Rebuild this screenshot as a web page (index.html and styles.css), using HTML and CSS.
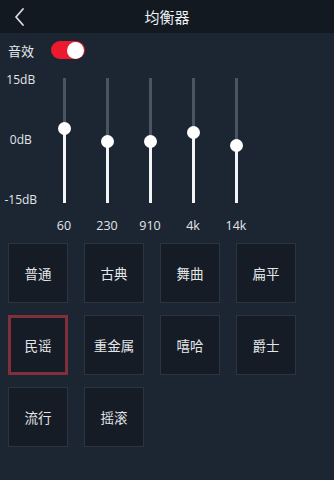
FILE: index.html
```html
<!DOCTYPE html>
<html lang="zh-CN">
<head>
<meta charset="utf-8">
<link rel="stylesheet" href="styles.css">
</head>
<body>
<div class="app">
  <header class="topbar">
    <svg class="back" width="12" height="20" viewBox="0 0 12 20"><polyline points="9,2 2,10 9,18" fill="none" stroke="#d8dde3" stroke-width="1.8" stroke-linecap="round" stroke-linejoin="round"/></svg>
    <div class="title">均衡器</div>
  </header>
  <div class="setting">
    <span class="setting-label">音效</span>
    <span class="toggle"><span class="knob"></span></span>
  </div>
  <div class="eq">
    <div class="scale">
      <span>15dB</span>
      <span>0dB</span>
      <span>-15dB</span>
    </div>
    <div class="band"><div class="track"><div class="rest" style="height:40%"></div><div class="fill"></div><span class="thumb" style="top:40%"></span></div><span class="freq">60</span></div>
    <div class="band"><div class="track"><div class="rest" style="height:50.4%"></div><div class="fill"></div><span class="thumb" style="top:50.4%"></span></div><span class="freq">230</span></div>
    <div class="band"><div class="track"><div class="rest" style="height:50.4%"></div><div class="fill"></div><span class="thumb" style="top:50.4%"></span></div><span class="freq">910</span></div>
    <div class="band"><div class="track"><div class="rest" style="height:43.2%"></div><div class="fill"></div><span class="thumb" style="top:43.2%"></span></div><span class="freq">4k</span></div>
    <div class="band"><div class="track"><div class="rest" style="height:53.6%"></div><div class="fill"></div><span class="thumb" style="top:53.6%"></span></div><span class="freq">14k</span></div>
  </div>
  <div class="presets">
    <div class="preset">普通</div>
    <div class="preset">古典</div>
    <div class="preset">舞曲</div>
    <div class="preset">扁平</div>
    <div class="preset active">民谣</div>
    <div class="preset">重金属</div>
    <div class="preset">嘻哈</div>
    <div class="preset">爵士</div>
    <div class="preset">流行</div>
    <div class="preset">摇滚</div>
  </div>
</div>
</body>
</html>
```
FILE: styles.css
```css
html, body {
  margin: 0;
  padding: 0;
  background: #1c2632;
}
body {
  width: 334px;
  height: 480px;
  overflow: hidden;
  font-family: "Open Sans", "Noto Sans CJK SC", sans-serif;
  color: #e6e9ed;
}
.app {
  display: flex;
  flex-direction: column;
}
.topbar {
  height: 33px;
  background: #131920;
  display: flex;
  align-items: center;
  position: relative;
}
.back {
  margin-left: 14px;
}
.title {
  position: absolute;
  left: 0;
  right: 0;
  text-align: center;
  font-family: "Noto Sans CJK SC", sans-serif;
  font-size: 15px;
  color: #eef0f3;
  line-height: 33px;
  pointer-events: none;
}
.setting {
  height: 34px;
  display: flex;
  align-items: center;
  padding-left: 8px;
  gap: 17px;
}
.setting-label {
  font-family: "Noto Sans CJK SC", sans-serif;
  font-size: 13px;
  color: #e6e9ed;
}
.toggle {
  width: 34px;
  height: 18px;
  border-radius: 9px;
  background: #ec1a2e;
  display: flex;
  justify-content: flex-end;
  align-items: center;
  padding: 0 1px;
  box-sizing: border-box;
}
.toggle .knob {
  width: 17px;
  height: 17px;
  border-radius: 50%;
  background: #ffffff;
}
.eq {
  display: grid;
  grid-template-columns: 34.5px repeat(5, 43px);
  padding-left: 8px;
  margin-top: 11px;
}
.scale {
  height: 134px;
  display: flex;
  flex-direction: column;
  justify-content: space-between;
  align-items: center;
  font-size: 12px;
  color: #e1e5e9;
  margin: -5px 7px 0 -2px;
}
.scale span {
  line-height: 14px;
  white-space: nowrap;
}
.band {
  display: flex;
  flex-direction: column;
  align-items: center;
}
.track {
  position: relative;
  width: 3px;
  height: 125px;
  display: flex;
  flex-direction: column;
}
.rest {
  background: #4a5561;
}
.fill {
  flex: 1;
  background: #f2f4f6;
}
.thumb {
  position: absolute;
  left: 50%;
  width: 13px;
  height: 13px;
  margin-left: -6.5px;
  margin-top: -6.5px;
  border-radius: 50%;
  background: #ffffff;
}
.freq {
  margin-top: 15px;
  font-size: 12.5px;
  line-height: 16px;
  color: #e1e5e9;
}
.presets {
  display: grid;
  grid-template-columns: repeat(4, 60px);
  grid-auto-rows: 60px;
  column-gap: 16px;
  row-gap: 12px;
  padding-left: 8px;
  margin-top: 9px;
}
.preset {
  box-sizing: border-box;
  border: 1px solid #2b3540;
  background: #151c25;
  display: flex;
  align-items: center;
  justify-content: center;
  font-family: "Noto Sans CJK SC", sans-serif;
  font-size: 13.5px;
  color: #e3e6ea;
}
.preset.active {
  border: 3px solid #80303a;
}
```
